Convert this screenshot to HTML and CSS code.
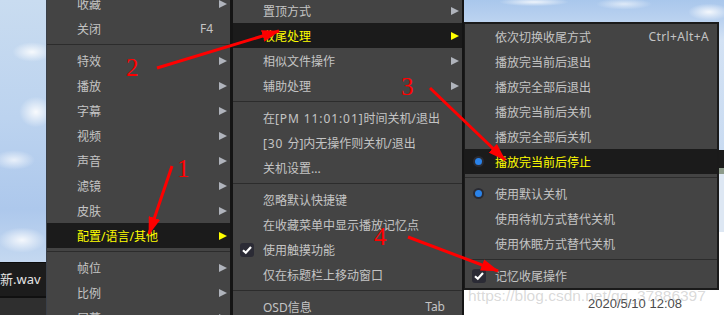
FILE: index.html
```html
<!DOCTYPE html>
<html lang="zh-CN">
<head>
    <meta charset="UTF-8">
    <title>收尾处理菜单</title>
    <link rel="stylesheet" href="styles.css">
</head>
<body>
    <div class="side">
        <div class="sky"></div>
        <div class="file">新.wav</div>
        <div class="dock"></div>
    </div>

    <div class="menu m1">
        <div class="item sub"><span class="ico"></span><span class="label">收藏</span></div>
        <div class="item"><span class="ico"></span><span class="label">关闭</span><span class="key">F4</span></div>
        <div class="sep"></div>
        <div class="item sub"><span class="ico"></span><span class="label">特效</span></div>
        <div class="item sub"><span class="ico"></span><span class="label">播放</span></div>
        <div class="item sub"><span class="ico"></span><span class="label">字幕</span></div>
        <div class="item sub"><span class="ico"></span><span class="label">视频</span></div>
        <div class="item sub"><span class="ico"></span><span class="label">声音</span></div>
        <div class="item sub"><span class="ico"></span><span class="label">滤镜</span></div>
        <div class="item sub"><span class="ico"></span><span class="label">皮肤</span></div>
        <div class="item sub on"><span class="ico"></span><span class="label">配置/语言/其他</span></div>
        <div class="sep"></div>
        <div class="item sub"><span class="ico"></span><span class="label">帧位</span></div>
        <div class="item sub"><span class="ico"></span><span class="label">比例</span></div>
        <div class="item sub"><span class="ico"></span><span class="label">屏幕</span></div>
    </div>

    <div class="menu m2">
        <div class="item sub"><span class="ico"></span><span class="label">置顶方式</span></div>
        <div class="item sub on"><span class="ico"></span><span class="label">收尾处理</span></div>
        <div class="item sub"><span class="ico"></span><span class="label">相似文件操作</span></div>
        <div class="item sub"><span class="ico"></span><span class="label">辅助处理</span></div>
        <div class="sep"></div>
        <div class="item"><span class="ico"></span><span class="label">在<span class="lat">[PM 11:01:01]</span>时间关机/退出</span></div>
        <div class="item"><span class="ico"></span><span class="label"><span class="lat">[30 </span>分]内无操作则关机/退出</span></div>
        <div class="item"><span class="ico"></span><span class="label">关机设置...</span></div>
        <div class="sep"></div>
        <div class="item"><span class="ico"></span><span class="label">忽略默认快捷键</span></div>
        <div class="item"><span class="ico"></span><span class="label">在收藏菜单中显示播放记忆点</span></div>
        <div class="item">
            <span class="ico"><span class="check"><svg width="10" height="10" viewBox="0 0 10 10"><path d="M1 5.2 L3.8 7.8 L9 2" fill="none" stroke="#fff" stroke-width="2.2"/></svg></span></span>
            <span class="label">使用触摸功能</span>
        </div>
        <div class="item"><span class="ico"></span><span class="label">仅在标题栏上移动窗口</span></div>
        <div class="sep"></div>
        <div class="item"><span class="ico"></span><span class="label">OSD信息</span><span class="key">Tab</span></div>
    </div>

    <div class="right">
        <div class="menu m3">
            <div class="item"><span class="ico"></span><span class="label">依次切换收尾方式</span><span class="key">Ctrl+Alt+A</span></div>
            <div class="item"><span class="ico"></span><span class="label">播放完当前后退出</span></div>
            <div class="item"><span class="ico"></span><span class="label">播放完全部后退出</span></div>
            <div class="item"><span class="ico"></span><span class="label">播放完当前后关机</span></div>
            <div class="item"><span class="ico"></span><span class="label">播放完全部后关机</span></div>
            <div class="item on"><span class="ico"><span class="radio"></span></span><span class="label">播放完当前后停止</span></div>
            <div class="sep"></div>
            <div class="item"><span class="ico"><span class="radio"></span></span><span class="label">使用默认关机</span></div>
            <div class="item"><span class="ico"></span><span class="label">使用待机方式替代关机</span></div>
            <div class="item"><span class="ico"></span><span class="label">使用休眠方式替代关机</span></div>
            <div class="sep"></div>
            <div class="item">
                <span class="ico"><span class="check"><svg width="10" height="10" viewBox="0 0 10 10"><path d="M1 5.2 L3.8 7.8 L9 2" fill="none" stroke="#fff" stroke-width="2.2"/></svg></span></span>
                <span class="label">记忆收尾操作</span>
            </div>
        </div>
        <div class="stamp">2020/5/10 12:08</div>
    </div>

    <!-- 截图上的红色标注 -->
    <svg class="marks" width="724" height="315" viewBox="0 0 724 315">
        <defs>
            <marker id="head" markerWidth="18" markerHeight="12" refX="17" refY="6" orient="auto" markerUnits="userSpaceOnUse">
                <path d="M0 0 L18 6 L0 12 Z" fill="#ff0000" stroke="none"/>
            </marker>
        </defs>
        <line x1="172" y1="166" x2="149" y2="234" marker-end="url(#head)"/>
        <line x1="157" y1="68" x2="279" y2="31" marker-end="url(#head)"/>
        <line x1="430" y1="88" x2="505" y2="160" marker-end="url(#head)"/>
        <line x1="408" y1="237" x2="498" y2="271" marker-end="url(#head)"/>
        <text x="177" y="177">1</text>
        <text x="126" y="76">2</text>
        <text x="401" y="95">3</text>
        <text x="374" y="245">4</text>
    </svg>

    <div class="wm">https://blog.csdn.net/qq_37886397</div>
</body>
</html>
```

FILE: styles.css
```css
* {
    box-sizing: border-box;
}
html, body {
    margin: 0;
}
body {
    width: 724px;
    height: 315px;
    overflow: hidden;
    position: relative;
    display: flex;
    align-items: flex-start;
    font-family: "Noto Sans", "Noto Sans CJK SC", sans-serif;
    font-size: 12px;
    background: #2e2e2e;
}

/* 背后的播放器窗口 */
.side {
    width: 46px;
    height: 315px;
    flex: none;
    display: flex;
    flex-direction: column;
}
.sky {
    height: 262px;
    background:
        radial-gradient(ellipse 28px 14px at 32px 52px, rgba(255,255,255,.85), transparent 70%),
        radial-gradient(ellipse 24px 22px at 36px 112px, rgba(255,255,255,.9), transparent 70%),
        radial-gradient(ellipse 30px 14px at 14px 160px, rgba(255,255,255,.7), transparent 70%),
        radial-gradient(ellipse 34px 18px at 22px 240px, rgba(255,255,255,.85), transparent 70%),
        linear-gradient(#c9dcf0, #bcd3ef 45%, #adc8ec 80%, #c4d8f0);
}
.file {
    height: 34px;
    background: #1c1c1c;
    border-top: 1px solid #0c0c0c;
    color: #e4e4e4;
    font-size: 13px;
    line-height: 32px;
    white-space: nowrap;
    overflow: hidden;
}
.dock {
    flex: 1;
    align-self: stretch;
    background: #2f2f2f;
    border-top: 2px solid #101010;
}

.right {
    width: 260px;
    height: 315px;
    flex: none;
    display: flex;
    flex-direction: column;
    background:
        radial-gradient(ellipse 50px 6px at 70px 2px, rgba(255,255,255,.8), transparent 70%),
        radial-gradient(ellipse 40px 8px at 160px 4px, rgba(255,255,255,.6), transparent 70%),
        radial-gradient(ellipse 30px 12px at 245px 12px, rgba(255,255,255,.85), transparent 70%),
        linear-gradient(#a9c7ec 0, #bcd3f0 22px, #d3e2f4 40px, #c9dbf1 150px, #1b1b1b 150px, #1b1b1b 168px, #8d9b8b 168px, #8d9b8b 174px, #dde7f3 174px, #dde7f3 232px, #fff 232px);
}
.stamp {
    flex: 1;
    background: #fff;
    padding: 3px 0 0 124px;
    color: #4a4a4a;
    font-family: "Liberation Sans", sans-serif;
    font-size: 13px;
    line-height: 22px;
}

/* 菜单 */
.menu {
    flex: none;
    background: #444444;
    color: #c4c4c4;
}
.m1 {
    width: 184px;
    margin-top: -9px;
    border-left: 1px solid #3a4049;
}
.m2 {
    width: 234px;
    margin-top: -2px;
    border-left: 3px solid #141414;
    border-right: 2px solid #141414;
}
.m3 {
    width: 255px;
    margin-top: 22px;
    border: 2px solid #1a1a1a;
    border-left-width: 1px;
}
.item {
    display: flex;
    align-items: center;
    height: 25px;
    white-space: nowrap;
}
.item.on {
    background: #1b1b1b;
    color: #ffff00;
}
.ico {
    width: 30px;
    flex: none;
    display: flex;
    align-items: center;
    padding-left: 7px;
}
.label {
    flex: 1;
}
.lat {
    letter-spacing: 0.9px;
}
.key {
    margin-right: 4px;
}
.m3 .key {
    margin-right: 0;
    letter-spacing: 0.4px;
}
.m1 .item::after,
.m2 .item::after {
    content: "";
    flex: none;
    width: 13px;
}
.m1 .item.sub::after,
.m2 .item.sub::after {
    width: 0;
    height: 0;
    border-left: 8px solid #b0b4bc;
    border-top: 4.5px solid transparent;
    border-bottom: 4.5px solid transparent;
    margin: 0 3px 0 2px;
}
.m1 .item.sub.on::after,
.m2 .item.sub.on::after {
    border-left-color: #ffff00;
}
.m3 .item {
    padding-right: 8px;
}
.sep {
    height: 1px;
    margin: 3px 0;
    background: #2c2c2c;
}
.check {
    width: 14px;
    height: 14px;
    border-radius: 3px;
    background: #2b2b35;
    display: flex;
    align-items: center;
    justify-content: center;
}
.radio {
    width: 11px;
    height: 11px;
    margin-left: 1px;
    border-radius: 50%;
    background: #2a2b33;
    display: flex;
    align-items: center;
    justify-content: center;
}
.radio::before {
    content: "";
    width: 7px;
    height: 7px;
    border-radius: 50%;
    background: #2a83ea;
}

/* 标注和水印 */
.marks {
    position: absolute;
    left: 0;
    top: 0;
    pointer-events: none;
}
.marks line {
    stroke: #ff0000;
    stroke-width: 3;
}
.marks text {
    fill: #ff0000;
    font-family: "Liberation Serif", serif;
    font-size: 25px;
}
.wm {
    position: absolute;
    left: 468px;
    top: 287px;
    font-family: "Liberation Sans", sans-serif;
    font-size: 15.5px;
    color: rgba(160,160,160,.4);
    white-space: nowrap;
    pointer-events: none;
}
```
